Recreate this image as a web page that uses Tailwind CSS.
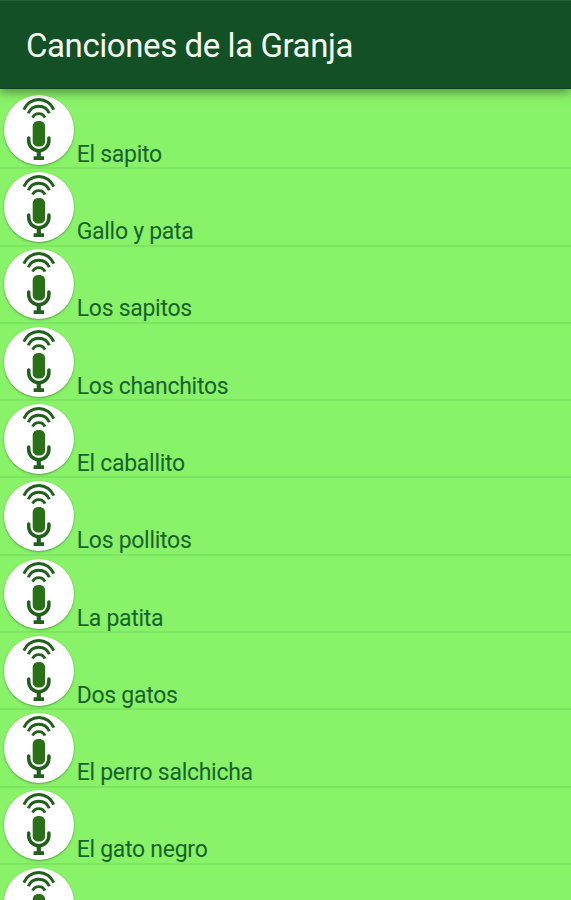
<!DOCTYPE html>
<html lang="es">
<head>
<meta charset="utf-8">
<title>Canciones de la Granja</title>
<script src="https://cdn.jsdelivr.net/npm/@tailwindcss/browser@4"></script>
</head>
<body class="h-[900px] overflow-hidden bg-[#88f268] font-[Roboto,sans-serif]">
<div class="flex h-[900px] flex-col overflow-hidden">
  <header class="relative z-10 flex h-[89px] shrink-0 items-center border-t border-b border-t-[#256038] border-b-[#0b431b] bg-[#145026] pl-[26px] pt-[1px] shadow-[0_3px_10px_rgba(50,70,40,0.6)]">
    <h1 class="whitespace-nowrap text-[33px] leading-none tracking-[-0.42px] text-[#f4faf2]">Canciones de la Granja</h1>
  </header>
  <ul id="songs" class="pt-[3px]"></ul>
</div>
<template id="row">
  <li class="flex h-[77.3px] items-end border-b-2 border-[#7de561] pb-[2.5px] pl-[3.7px]">
    <svg class="h-[70px] w-[70px] shrink-0 rounded-full bg-white shadow-[0_1px_2px_rgba(20,90,20,0.5)]" viewBox="0 0 70 70" fill="none" stroke="#21601b" stroke-linecap="butt">
      <path d="M19.8 14.6A16.2 16.2 0 0 1 49.8 14.6" stroke-width="2.9"/>
      <path d="M24.3 18.3A11.3 11.3 0 0 1 45.3 18.3" stroke-width="2.9"/>
      <path d="M28.6 22.6A6.8 6.8 0 0 1 41 22.6" stroke-width="2.9"/>
      <rect x="28.7" y="26" width="12.4" height="25.6" rx="5.2" fill="#297016" stroke="none"/>
      <path d="M24.7 43V45.6A10.1 10.1 0 0 0 44.9 45.6V43" stroke-width="3.5" stroke-linecap="round"/>
      <path d="M34.8 55.6V63" stroke-width="4.2"/>
      <path d="M29.6 63.1H40" stroke-width="3.8"/>
    </svg>
    <span class="relative top-[3px] ml-[3px] whitespace-nowrap text-[23px] leading-[27px] tracking-[-0.28px] text-[#17622c]"></span>
  </li>
</template>
<script>
const songs = ["El sapito", "Gallo y pata", "Los sapitos", "Los chanchitos", "El caballito", "Los pollitos", "La patita", "Dos gatos", "El perro salchicha", "El gato negro", ""];
const list = document.getElementById("songs");
const row = document.getElementById("row");
for (const name of songs) {
  const item = row.content.cloneNode(true);
  item.querySelector("span").textContent = name;
  list.append(item);
}
</script>
</body>
</html>
